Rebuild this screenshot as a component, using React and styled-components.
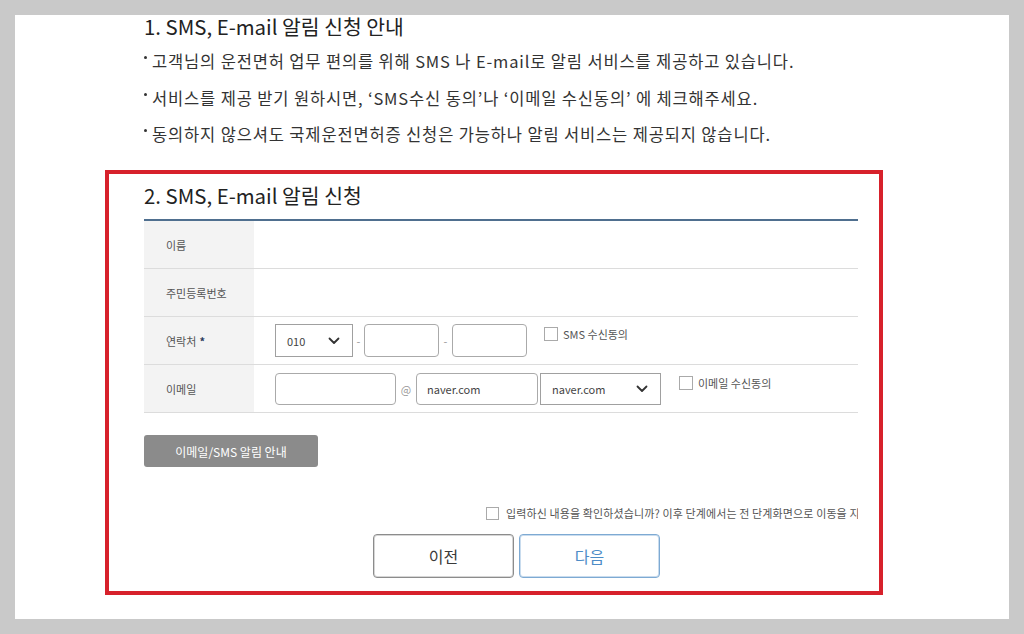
import React from 'react';
import styled, { createGlobalStyle } from 'styled-components';

const GlobalStyle = createGlobalStyle`
    html, body {
        margin: 0;
        padding: 0;
        background: #c9c9c9;
    }
    body {
        font-family: "Noto Sans CJK KR", "Noto Sans", sans-serif;
        color: #333;
    }
    * {
        box-sizing: border-box;
    }
`;

const Page = styled.div`
    height: 634px;
    padding: 15px;
`;

const Sheet = styled.div`
    background: #fff;
    height: 604px;
`;

const Intro = styled.section`
    padding-left: 129px;
`;

const IntroTitle = styled.h2`
    margin: 0;
    font-size: 20.4px;
    line-height: 22px;
    font-weight: 400;
    color: #222;
`;

const BulletList = styled.ul`
    list-style: none;
    margin: 6px 0 0;
    padding: 0;
`;

const Bullet = styled.li`
    font-size: 16.5px;
    letter-spacing: 0.85px;
    line-height: 36.5px;
    color: #333;
    white-space: nowrap;

    &::before {
        content: '';
        display: inline-block;
        width: 3px;
        height: 3px;
        border-radius: 50%;
        background: #333;
        margin-right: 5px;
        vertical-align: 9px;
    }
`;

const Highlight = styled.div`
    margin: 17.5px 0 0 90px;
    width: 778px;
    height: 425px;
    border: 4px solid #d7212b;
    padding: 0 21px 0 35px;
`;

const FormTitle = styled.h2`
    margin: 6px 0 9px;
    font-size: 20.4px;
    line-height: 30px;
    font-weight: 400;
    color: #222;
`;

const Table = styled.div`
    border-top: 2px solid #4f6f8f;
`;

const Row = styled.div`
    display: grid;
    grid-template-columns: 110px 1fr;
    height: 48px;
    border-bottom: 1px solid #dcdcdc;
`;

const LabelCell = styled.div`
    display: flex;
    align-items: center;
    padding-left: 22px;
    background: #f3f3f3;
    font-size: 11px;
    color: #555;
`;

const Required = styled.span`
    margin-left: 3px;
    color: #2b3a5c;
    font-weight: 700;
`;

const ValueCell = styled.div`
    display: flex;
    align-items: center;
    padding-left: 21px;
`;

const Controls = styled.div`
    display: flex;
    align-items: flex-start;
`;

const Sep = styled.span`
    align-self: center;
    width: ${props => props.$w}px;
    text-align: center;
    font-size: 11px;
    color: #999;
`;

const TextInput = styled.input`
    width: ${props => props.$w}px;
    height: ${props => props.$h}px;
    border: 1px solid #aaa;
    border-radius: 4px;
    padding: 0 10px;
    font-family: inherit;
    font-size: 11px;
    color: #444;
    background: #fff;
    outline: none;
    margin-left: ${props => props.$ml || 0}px;
`;

const FakeSelect = styled.div`
    display: flex;
    align-items: center;
    justify-content: space-between;
    width: ${props => props.$w}px;
    height: ${props => props.$h}px;
    border: 1px solid #a0a0a0;
    padding: 0 12px 0 11px;
    font-size: 11px;
    color: #444;
    background: #fff;
    margin-left: ${props => props.$ml || 0}px;
`;

const Agree = styled.label`
    display: flex;
    align-items: center;
    margin: 3px 0 0 ${props => props.$ml}px;
    font-size: 11px;
    line-height: 14px;
    color: #555;
`;

const Box = styled.span`
    display: inline-block;
    width: ${props => props.$s || 14}px;
    height: ${props => props.$s || 14}px;
    border: 1px solid #aaa;
    background: #fff;
    margin-right: ${props => props.$gap || 5}px;
    flex: none;
`;

const GuideButton = styled.button`
    display: block;
    margin-top: 22px;
    width: 174px;
    height: 32px;
    border: none;
    border-radius: 3px;
    background: #8b8b8b;
    color: #fff;
    font-family: inherit;
    font-size: 12px;
`;

const Confirm = styled.label`
    display: flex;
    align-items: center;
    margin-top: 39px;
    padding-left: 342px;
    font-size: 11px;
    letter-spacing: 0.12px;
    line-height: 14px;
    color: #555;
    white-space: nowrap;
    overflow: hidden;
`;

const NavRow = styled.div`
    display: flex;
    gap: 5px;
    margin-top: 14px;
    padding-left: 229px;
`;

const NavButton = styled.button`
    width: 141px;
    height: 44px;
    border-radius: 4px;
    background: #fff;
    font-family: inherit;
    font-size: 16px;
    font-weight: 400;
    border: 1px solid ${props => (props.$primary ? '#7eaad3' : '#8c8c8c')};
    color: ${props => (props.$primary ? '#4d8cc7' : '#3a3a3a')};
    box-shadow: ${props => (props.$primary ? 'inset 0 0 0 1px #c9dcee' : 'inset 0 0 0 1px #d6d6d6')};
`;

const Chevron = () => (
    <svg width="12" height="8" viewBox="0 0 12 8" fill="none">
        <polyline points="1.5,1.5 6,6 10.5,1.5" stroke="#333" strokeWidth="1.8" strokeLinecap="round" strokeLinejoin="round" />
    </svg>
);

const App = () => (
    <Page>
        <GlobalStyle />
        <Sheet>
            <Intro>
                <IntroTitle>1. SMS, E-mail 알림 신청 안내</IntroTitle>
                <BulletList>
                    <Bullet>고객님의 운전면허 업무 편의를 위해 SMS 나 E-mail로 알림 서비스를 제공하고 있습니다.</Bullet>
                    <Bullet>서비스를 제공 받기 원하시면, ‘SMS수신 동의’나 ‘이메일 수신동의’ 에 체크해주세요.</Bullet>
                    <Bullet>동의하지 않으셔도 국제운전면허증 신청은 가능하나 알림 서비스는 제공되지 않습니다.</Bullet>
                </BulletList>
            </Intro>

            <Highlight>
                <FormTitle>2. SMS, E-mail 알림 신청</FormTitle>
                <Table>
                    <Row>
                        <LabelCell>이름</LabelCell>
                        <ValueCell />
                    </Row>
                    <Row>
                        <LabelCell>주민등록번호</LabelCell>
                        <ValueCell />
                    </Row>
                    <Row>
                        <LabelCell>연락처<Required>*</Required></LabelCell>
                        <ValueCell>
                            <Controls>
                                <FakeSelect $w={78} $h={33}>
                                    010
                                    <Chevron />
                                </FakeSelect>
                                <Sep $w={11}>-</Sep>
                                <TextInput $w={75} $h={33} />
                                <Sep $w={13}>-</Sep>
                                <TextInput $w={75} $h={33} />
                                <Agree $ml={17}>
                                    <Box />
                                    SMS 수신동의
                                </Agree>
                            </Controls>
                        </ValueCell>
                    </Row>
                    <Row>
                        <LabelCell>이메일</LabelCell>
                        <ValueCell>
                            <Controls>
                                <TextInput $w={121} $h={32} />
                                <Sep $w={20}>@</Sep>
                                <TextInput $w={122} $h={32} defaultValue="naver.com" />
                                <FakeSelect $w={121} $h={32} $ml={2}>
                                    naver.com
                                    <Chevron />
                                </FakeSelect>
                                <Agree $ml={18}>
                                    <Box />
                                    이메일 수신동의
                                </Agree>
                            </Controls>
                        </ValueCell>
                    </Row>
                </Table>

                <GuideButton type="button">이메일/SMS 알림 안내</GuideButton>

                <Confirm>
                    <Box $s={13} $gap={7} />
                    입력하신 내용을 확인하셨습니까? 이후 단계에서는 전 단계화면으로 이동을 지원하지 않습니다.
                </Confirm>

                <NavRow>
                    <NavButton type="button">이전</NavButton>
                    <NavButton type="button" $primary>다음</NavButton>
                </NavRow>
            </Highlight>
        </Sheet>
    </Page>
);

export default App;
